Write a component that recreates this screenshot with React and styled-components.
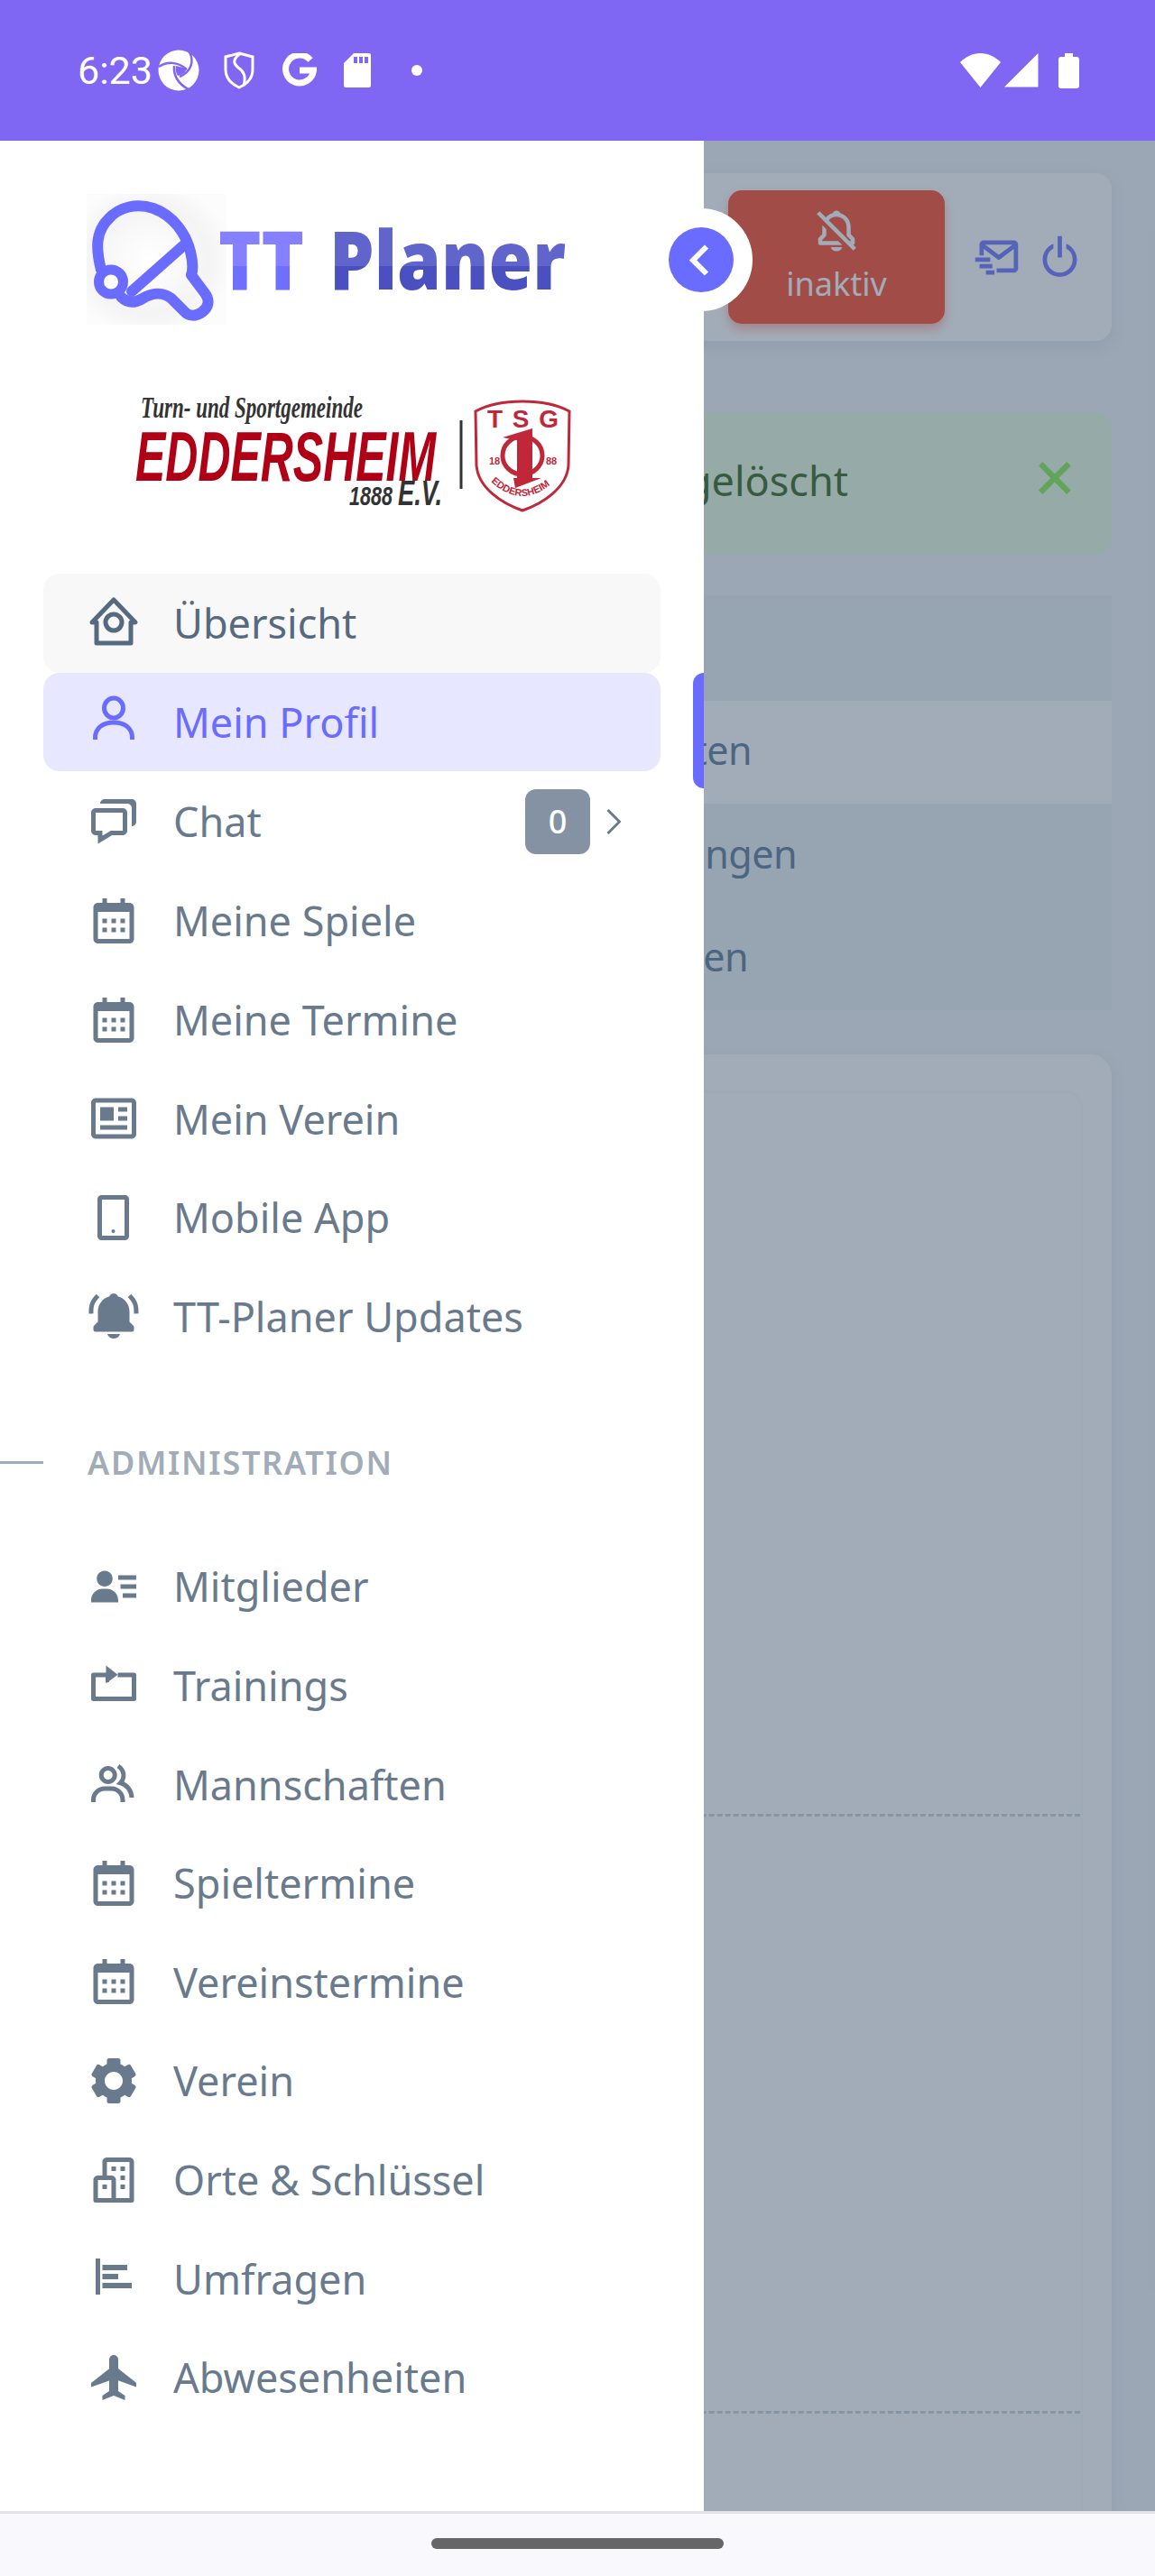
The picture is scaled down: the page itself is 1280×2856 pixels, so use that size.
import React from "react";
import styled, { createGlobalStyle } from "styled-components";
import {
  BiChat,
  BiCalendar,
  BiNews,
  BiSolidBellRing,
  BiSolidUserDetail,
  BiGroup,
  BiSolidCog,
  BiBuildings,
  BiSolidPlane,
  BiChevronLeft,
  BiBellOff,
  BiMailSend,
  BiPowerOff,
  BiX,
} from "react-icons/bi";

const GlobalStyle = createGlobalStyle`
  html, body {
    margin: 0;
    padding: 0;
    background: #f8f8fd;
  }
  * {
    box-sizing: border-box;
  }
`;

const Screen = styled.div`
  width: 1280px;
  height: 2856px;
  display: flex;
  flex-direction: column;
  overflow: hidden;
  font-family: "Noto Sans", "Liberation Sans", sans-serif;
`;

const StatusBar = styled.div`
  height: 156px;
  flex: none;
  background: #7f66f3;
  color: #fff;
  display: flex;
  align-items: center;
  justify-content: space-between;
  padding: 0 84px 0 86px;
`;

const StatusGroup = styled.div`
  display: flex;
  align-items: center;
  gap: ${(p) => p.$gap}px;
`;

const Clock = styled.span`
  font-family: Roboto, sans-serif;
  font-size: 43px;
  line-height: 1;
  margin-right: -24px;
`;

const SwirlGlyph = styled.svg`
  margin-right: -4px;
`;

const NoticeDot = styled.span`
  width: 12px;
  height: 12px;
  margin-left: 15px;
  border-radius: 50%;
  background: #fff;
`;

const SignalGlyph = styled.svg`
  margin-right: 18px;
`;

const Stage = styled.div`
  flex: 1;
  position: relative;
  overflow: hidden;
  background: #f3f4f8;
`;

const Content = styled.div`
  height: 100%;
  padding: 36px 48px 0;
  display: flex;
  flex-direction: column;
`;

const Card = styled.div`
  background: #fff;
  border-radius: 18px;
  box-shadow: 0 6px 18px rgba(67, 89, 113, 0.12);
`;

const TopBar = styled(Card)`
  height: 186px;
  flex: none;
  display: flex;
  align-items: center;
  justify-content: flex-end;
  padding-right: 29px;
  gap: 13px;
  color: #696cff;
`;

const AlarmButton = styled.div`
  width: 240px;
  height: 148px;
  margin-right: 16px;
  border-radius: 15px;
  background: #ff3e1d;
  color: #fff;
  box-shadow: 0 6px 12px rgba(255, 62, 29, 0.4);
  display: flex;
  flex-direction: column;
  align-items: center;
  padding-top: 18px;
  font-size: 36px;
  line-height: 44px;
`;

const AlarmLabel = styled.span`
  margin-top: 10px;
`;

const Alert = styled.div`
  height: 158px;
  flex: none;
  margin-top: 79px;
  border-radius: 18px;
  background: #e8fadf;
  color: #295d0d;
  display: flex;
  align-items: center;
  justify-content: flex-end;
  padding: 0 25px 7px 0;
  font-size: 45px;
`;

const AlertClose = styled.div`
  color: #81ef43;
  display: flex;
  margin: 0 0 5px 191px;
`;

const ListCard = styled.div`
  height: 460px;
  flex: none;
  margin-top: 45px;
  padding-top: 117px;
  background: #ebeef1;
  display: flex;
  flex-direction: column;
`;

const ListRow = styled.div`
  height: 114.4px;
  flex: none;
  display: flex;
  align-items: center;
  justify-content: flex-end;
  padding: 0 ${(p) => p.$inset}px 5px 0;
  background: ${(p) => (p.$active ? "#fff" : "transparent")};
  color: #55718f;
  font-size: 43px;
  letter-spacing: -0.5px;
`;

const SheetCard = styled(Card)`
  flex: 1;
  margin-top: 49px;
  border-radius: 24px 24px 0 0;
  padding: 40px 32px 0;
`;

const SheetInner = styled.div`
  height: 100%;
  border: 3px solid #fafafc;
  border-bottom: 0;
  border-radius: 18px 18px 0 0;
`;

const SheetRow = styled.div`
  height: ${(p) => p.$height}px;
  border-bottom: 3px dashed #c8ced6;
`;

const Backdrop = styled.div`
  position: absolute;
  inset: 0;
  background: rgba(67, 89, 113, 0.5);
`;

const Drawer = styled.aside`
  position: absolute;
  top: 0;
  bottom: 0;
  left: 0;
  width: 780px;
  background: #fff;
  display: flex;
  flex-direction: column;
`;

const BrandLogo = styled.svg`
  display: block;
  flex: none;
  overflow: visible;
  margin: 59px 0 0 96px;
`;

const ClubLogo = styled.svg`
  display: block;
  flex: none;
  overflow: visible;
  margin: 76px 0 0 140px;
`;

const Menu = styled.nav`
  margin-top: 64px;
  padding: 0 48px;
  display: flex;
  flex-direction: column;
`;

const tones = {
  hover: { color: "#566a7f", bg: "#f8f8f8" },
  active: { color: "#696cff", bg: "#e7e7ff" },
  plain: { color: "#697a8d", bg: "transparent" },
};

const MenuRow = styled.a`
  position: relative;
  height: ${(p) => p.$height || 109.6}px;
  flex: none;
  display: flex;
  align-items: center;
  padding: 0 44px 0 48px;
  border-radius: 18px;
  background: ${(p) => tones[p.$tone].bg};
  color: ${(p) => tones[p.$tone].color};
  font-size: 45px;
`;

const MenuIcon = styled.span`
  width: 60px;
  height: 60px;
  flex: none;
  margin-right: 36px;
  display: flex;
  font-size: 60px;
`;

const MenuLabel = styled.span`
  flex: 1;
`;

const ActiveMark = styled.span`
  position: absolute;
  top: 0;
  right: -48px;
  width: 12px;
  height: 128px;
  background: #696cff;
  border-radius: 12px 0 0 12px;
`;

const CountBadge = styled.span`
  width: 72px;
  height: 72px;
  flex: none;
  margin-right: 18px;
  border-radius: 12px;
  background: #8592a3;
  color: #fff;
  font-size: 36px;
  font-weight: 500;
  display: flex;
  align-items: center;
  justify-content: center;
`;

const MenuHeader = styled.div`
  height: 190px;
  flex: none;
  margin: 0 -48px;
  padding-top: 25px;
  display: flex;
  align-items: center;
  gap: 49px;
  color: #a1acb8;
  font-size: 36px;
  font-weight: 600;
  letter-spacing: 1.7px;
`;

const HeaderRule = styled.span`
  width: 48px;
  height: 3px;
  background: #a1acb8;
`;

const ToggleRing = styled.div`
  position: absolute;
  left: 720px;
  top: 75px;
  width: 114px;
  height: 114px;
  border-radius: 50%;
  background: #fff;
  display: flex;
  align-items: center;
  justify-content: center;
`;

const ToggleDot = styled.div`
  width: 72px;
  height: 72px;
  border-radius: 50%;
  background: #696cff;
  color: #fff;
  display: flex;
  align-items: center;
  justify-content: center;
`;

const NavBar = styled.div`
  height: 72px;
  flex: none;
  border-top: 3px solid #e2e2ea;
  background: #f8f8fd;
  display: flex;
  justify-content: center;
  padding-top: 27px;
`;

const GesturePill = styled.div`
  width: 324px;
  height: 12px;
  border-radius: 6px;
  background: #666;
`;

const HomeIcon = () => (
  <svg width="60" height="60" viewBox="0 0 60 60" fill="none" stroke="currentColor" strokeWidth="5" strokeLinejoin="round">
    <path d="M6 29L30 4l24 25h-5v23H11V29z" />
    <circle cx="30" cy="29" r="9" />
  </svg>
);

const UserIcon = () => (
  <svg width="60" height="60" viewBox="0 0 60 60" fill="none" stroke="currentColor" strokeWidth="5">
    <ellipse cx="30" cy="15" rx="10.500" ry="11" />
    <path d="M9.500 50v-2c0-11 8.500-17 20.500-17s20.500 6 20.500 17v2" />
  </svg>
);

const PhoneIcon = () => (
  <svg width="60" height="60" viewBox="0 0 60 60" fill="none" stroke="currentColor" strokeWidth="5" strokeLinejoin="round">
    <rect x="14.500" y="7.500" width="30" height="45" rx="2" />
    <circle cx="29.500" cy="45" r="2" fill="currentColor" stroke="none" />
  </svg>
);

const TrainingIcon = () => (
  <svg width="60" height="60" viewBox="0 0 24 24" fill="currentColor">
    <path d="M2 6.200h6.600v2H4v8.600h16V8.200h-6.200v-2H21a1 1 0 0 1 1 1v10.600a1 1 0 0 1-1 1H3a1 1 0 0 1-1-1V7.200a1 1 0 0 1 1-1z" />
    <path d="M8.600 3l5.200 4.100-5.200 3.900V8.200H8.600z" />
    <path d="M8.400 6.200h1.600v4.200H8.400z" />
  </svg>
);

const PollIcon = () => (
  <svg width="60" height="60" viewBox="0 0 24 24" fill="currentColor">
    <path d="M4 3.200h2v16H4z" />
    <path d="M7 6h11v2.400H7zM7 10h7v2.400H7zM7 14h13v2.400H7z" />
  </svg>
);

const ThinChevron = () => (
  <svg width="16" height="28" viewBox="0 0 16 28" fill="none" stroke="#697a8d" strokeWidth="3">
    <path d="M1.500 1l13 13-13 13" />
  </svg>
);

const mainItems = [
  { label: "Übersicht", icon: <HomeIcon />, tone: "hover" },
  { label: "Mein Profil", icon: <UserIcon />, tone: "active", mark: true },
  { label: "Chat", icon: <BiChat />, count: 0, height: 111 },
  { label: "Meine Spiele", icon: <BiCalendar /> },
  { label: "Meine Termine", icon: <BiCalendar /> },
  { label: "Mein Verein", icon: <BiNews /> },
  { label: "Mobile App", icon: <PhoneIcon /> },
  { label: "TT-Planer Updates", icon: <BiSolidBellRing /> },
];

const adminItems = [
  { label: "Mitglieder", icon: <BiSolidUserDetail /> },
  { label: "Trainings", icon: <TrainingIcon /> },
  { label: "Mannschaften", icon: <BiGroup /> },
  { label: "Spieltermine", icon: <BiCalendar /> },
  { label: "Vereinstermine", icon: <BiCalendar /> },
  { label: "Verein", icon: <BiSolidCog /> },
  { label: "Orte & Schlüssel", icon: <BiBuildings /> },
  { label: "Umfragen", icon: <PollIcon /> },
  { label: "Abwesenheiten", icon: <BiSolidPlane /> },
];

function renderItem({ label, icon, tone = "plain", mark, count, height }) {
  return (
    <MenuRow key={label} $tone={tone} $height={height}>
      <MenuIcon>{icon}</MenuIcon>
      <MenuLabel>{label}</MenuLabel>
      {count !== undefined && (
        <>
          <CountBadge>{count}</CountBadge>
          <ThinChevron />
        </>
      )}
      {mark && <ActiveMark />}
    </MenuRow>
  );
}

function StatusIcons() {
  return (
    <StatusGroup $gap={30}>
      <Clock>6:23</Clock>
      <SwirlGlyph width="46" height="46" viewBox="0 0 46 46">
        <circle cx="23" cy="23" r="22.500" fill="#fff" />
        <path d="M20 18l12 3c-1 4-5 7-10 8-2-3-3-7-2-11z" fill="#7f66f3" />
        <g fill="none" stroke="#7f66f3" strokeWidth="2.500">
          <path d="M1 19c9-6 21-6 31 3" />
          <path d="M35 3c5 9 3 21-11 27" />
          <path d="M18 18c-1 10 4 20 16 26" />
        </g>
      </SwirlGlyph>
      <svg width="36" height="42" viewBox="0 0 36 42" fill="none" stroke="#fff" strokeWidth="3">
        <path d="M18 2l15 4v14c0 9-6 16-15 20C9 36 3 29 3 20V6z" />
        <path d="M20 2c-9 6-9 11-3 16 6 4 9 9 6 20" />
      </svg>
      <svg width="38" height="38" viewBox="0 0 38 38" fill="none" stroke="#fff" strokeWidth="7">
        <path d="M31 7.500A15.500 15.500 0 1 0 34.500 19H19" />
      </svg>
      <svg width="30" height="38" viewBox="0 0 30 38" fill="#fff">
        <path d="M11 0h17a2 2 0 0 1 2 2v34a2 2 0 0 1-2 2H2a2 2 0 0 1-2-2V11zM11 4v7h4V4zm6 0v7h4V4zm6 0v7h4V4z" fillRule="evenodd" />
      </svg>
      <NoticeDot />
    </StatusGroup>
  );
}

function SystemIcons() {
  return (
    <StatusGroup $gap={4}>
      <svg width="45" height="38" viewBox="0 0 45 38" fill="#fff">
        <path d="M0 10C6 4 14 0 22.500 0S39 4 45 10L22.500 38z" />
      </svg>
      <SignalGlyph width="38" height="38" viewBox="0 0 38 38" fill="#fff">
        <path d="M37.500 0v37.500H0z" />
      </SignalGlyph>
      <svg width="23" height="39" viewBox="0 0 23 39" fill="#fff">
        <path d="M7 0h9v4h4a3 3 0 0 1 3 3v29a3 3 0 0 1-3 3H3a3 3 0 0 1-3-3V7a3 3 0 0 1 3-3h4z" />
      </svg>
    </StatusGroup>
  );
}

function TTPlanerLogo() {
  return (
    <BrandLogo width="540" height="145" viewBox="0 0 540 145">
      <defs>
        <linearGradient id="ttFill" gradientUnits="userSpaceOnUse" x1="0" y1="41" x2="0" y2="106">
          <stop offset="0" stopColor="#8480ff" />
          <stop offset="0.6" stopColor="#8480ff" />
          <stop offset="0.6" stopColor="#6f6fff" />
          <stop offset="1" stopColor="#6f6fff" />
        </linearGradient>
        <linearGradient id="planerFill" gradientUnits="userSpaceOnUse" x1="0" y1="41" x2="0" y2="106">
          <stop offset="0" stopColor="#6065cc" />
          <stop offset="0.6" stopColor="#6065cc" />
          <stop offset="0.6" stopColor="#4a50c0" />
          <stop offset="1" stopColor="#4a50c0" />
        </linearGradient>
        <radialGradient id="paddleGlow" cx="0.45" cy="0.5" r="0.6">
          <stop offset="0" stopColor="#fff" />
          <stop offset="0.7" stopColor="#f4f4f4" />
          <stop offset="1" stopColor="#fcfcfc" />
        </radialGradient>
      </defs>
      <rect x="0" y="0" width="155" height="145" fill="url(#paddleGlow)" />
      <path
        d="M16 84C10 60 10 42 24 28 36 14 56 10 74 16c22 8 36 28 41 48 3 12 3 20 1 26l15 20c6 8 4 16-3 21-7 5-15 5-20-1L94 116c-10-8-22-6-32 0-10 6-18 4-24-2"
        fill="none"
        stroke="#696cff"
        strokeWidth="12"
        strokeLinecap="round"
        strokeLinejoin="round"
      />
      <path d="M111 54L50 108" stroke="#696cff" strokeWidth="12" strokeLinecap="round" />
      <circle cx="27" cy="97.500" r="13.500" fill="#fff" stroke="#696cff" strokeWidth="11" />
      <text
        x="146"
        y="106"
        fontFamily="'Open Sans', sans-serif"
        fontWeight="800"
        fontSize="91"
        textLength="95"
        lengthAdjust="spacingAndGlyphs"
        fill="url(#ttFill)"
      >
        TT
      </text>
      <text
        x="269"
        y="106"
        fontFamily="'Open Sans', sans-serif"
        fontWeight="800"
        fontSize="91"
        textLength="262"
        lengthAdjust="spacingAndGlyphs"
        fill="url(#planerFill)"
      >
        Planer
      </text>
    </BrandLogo>
  );
}

function EddersheimLogo() {
  return (
    <ClubLogo width="500" height="136" viewBox="0 0 500 136">
      <text
        x="16"
        y="27"
        fontFamily="'Liberation Serif', serif"
        fontStyle="italic"
        fontWeight="700"
        fontSize="34"
        textLength="246"
        lengthAdjust="spacingAndGlyphs"
        fill="#333"
      >
        Turn- und Sportgemeinde
      </text>
      <text
        x="10"
        y="97"
        fontFamily="'Liberation Sans', sans-serif"
        fontStyle="italic"
        fontWeight="700"
        fontSize="78"
        textLength="333"
        lengthAdjust="spacingAndGlyphs"
        fill="#b00015"
      >
        EDDERSHEIM
      </text>
      <text
        x="247"
        y="124"
        fontFamily="'Liberation Sans', sans-serif"
        fontStyle="italic"
        fontWeight="700"
        fontSize="30"
        textLength="103"
        lengthAdjust="spacingAndGlyphs"
        fill="#333"
      >
        1888 <tspan fontSize="38">E.V.</tspan>
      </text>
      <path d="M371 30v76" stroke="#333" strokeWidth="3" />
      <path
        d="M439 9c21 0 39 4 52 11l-1 60c-2 25-28 42-51 50-23-8-49-25-51-50l-1-60c13-7 31-11 52-11z"
        fill="#fff"
        stroke="#c0283a"
        strokeWidth="3"
      />
      <text
        x="400"
        y="38"
        fontFamily="'Liberation Sans', sans-serif"
        fontWeight="700"
        fontSize="28"
        textLength="79"
        fill="#c0283a"
      >
        TSG
      </text>
      <ellipse cx="439" cy="69" rx="22" ry="21" fill="none" stroke="#c0283a" strokeWidth="5" />
      <path d="M417 49l33-10v55h-17V52z" fill="#c0283a" />
      <path d="M429 94h31l-29 11z" fill="#c0283a" />
      <text x="402" y="79" fontFamily="'Liberation Sans', sans-serif" fontSize="11" fontWeight="700" fill="#c0283a">
        18
      </text>
      <text x="465" y="79" fontFamily="'Liberation Sans', sans-serif" fontSize="11" fontWeight="700" fill="#c0283a">
        88
      </text>
      <path id="sealArc" d="M400 94Q439 134 478 94" fill="none" />
      <text fontFamily="'Liberation Sans', sans-serif" fontSize="11" fontWeight="700" fill="#c0283a">
        <textPath href="#sealArc" startOffset="6%">
          EDDERSHEIM
        </textPath>
      </text>
    </ClubLogo>
  );
}

export default function App() {
  return (
    <Screen>
      <GlobalStyle />
      <StatusBar>
        <StatusIcons />
        <SystemIcons />
      </StatusBar>
      <Stage>
        <Content>
          <TopBar>
            <AlarmButton>
              <BiBellOff size={54} />
              <AlarmLabel>inaktiv</AlarmLabel>
            </AlarmButton>
            <BiMailSend size={57} />
            <BiPowerOff size={57} />
          </TopBar>
          <Alert>
            gelöscht
            <AlertClose>
              <BiX size={76} />
            </AlertClose>
          </Alert>
          <ListCard>
            <ListRow $active $inset={399}>
              ten
            </ListRow>
            <ListRow $inset={349}>ngen</ListRow>
            <ListRow $inset={403}>en</ListRow>
          </ListCard>
          <SheetCard>
            <SheetInner>
              <SheetRow $height={802} />
              <SheetRow $height={662} />
            </SheetInner>
          </SheetCard>
        </Content>
        <Backdrop />
        <Drawer>
          <TTPlanerLogo />
          <EddersheimLogo />
          <Menu>
            {mainItems.map(renderItem)}
            <MenuHeader>
              <HeaderRule />
              ADMINISTRATION
            </MenuHeader>
            {adminItems.map(renderItem)}
          </Menu>
        </Drawer>
        <ToggleRing>
          <ToggleDot>
            <BiChevronLeft size={75} />
          </ToggleDot>
        </ToggleRing>
      </Stage>
      <NavBar>
        <GesturePill />
      </NavBar>
    </Screen>
  );
}
